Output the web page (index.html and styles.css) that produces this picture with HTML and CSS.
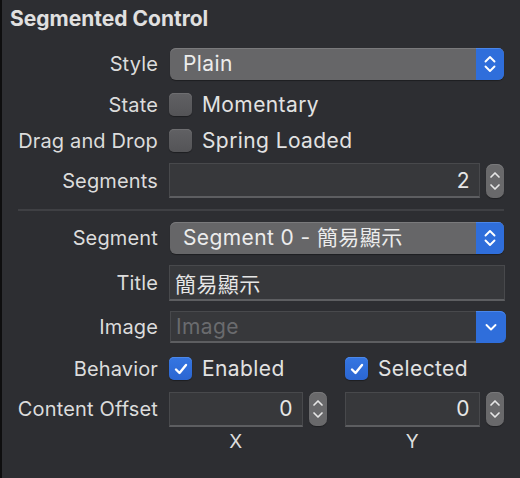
FILE: index.html
```html
<!DOCTYPE html>
<html>
<head>
<meta charset="utf-8">
<link rel="stylesheet" href="styles.css">
</head>
<body>
<div class="panel">
  <div class="heading">Segmented Control</div>

  <div class="row r-style">
    <div class="label">Style</div>
    <div class="popup">
      <span class="popup-text">Plain</span>
      <span class="popup-btn">
        <svg width="14" height="20" viewBox="0 0 14 20"><path d="M2.5 7.5 L7 3 L11.5 7.5 M2.5 12.5 L7 17 L11.5 12.5" fill="none" stroke="#fff" stroke-width="1.9" stroke-linecap="round" stroke-linejoin="round"/></svg>
      </span>
    </div>
  </div>

  <div class="row r-check">
    <div class="label">State</div>
    <div class="checkline"><span class="cb"></span><span class="cb-text">Momentary</span></div>
  </div>

  <div class="row r-check r-drag">
    <div class="label">Drag and Drop</div>
    <div class="checkline"><span class="cb"></span><span class="cb-text">Spring Loaded</span></div>
  </div>

  <div class="row r-field r-segments">
    <div class="label">Segments</div>
    <div class="numgroup">
      <div class="field num">2</div>
      <span class="stepper">
        <svg width="12" height="26" viewBox="0 0 12 26"><path d="M2 9 L6 5 L10 9 M2 17 L6 21 L10 17" fill="none" stroke="#e6e6e6" stroke-width="1.7" stroke-linecap="round" stroke-linejoin="round"/></svg>
      </span>
    </div>
  </div>

  <div class="sep"></div>

  <div class="row r-segment">
    <div class="label">Segment</div>
    <div class="popup">
      <span class="popup-text">Segment 0 - 簡易顯示</span>
      <span class="popup-btn">
        <svg width="14" height="20" viewBox="0 0 14 20"><path d="M2.5 7.5 L7 3 L11.5 7.5 M2.5 12.5 L7 17 L11.5 12.5" fill="none" stroke="#fff" stroke-width="1.9" stroke-linecap="round" stroke-linejoin="round"/></svg>
      </span>
    </div>
  </div>

  <div class="row r-field r-title">
    <div class="label">Title</div>
    <div class="field text">簡易顯示</div>
  </div>

  <div class="row r-image">
    <div class="label">Image</div>
    <div class="combo">
      <span class="combo-text">Image</span>
      <span class="combo-btn">
        <svg width="14" height="10" viewBox="0 0 14 10"><path d="M2.5 3 L7 7.5 L11.5 3" fill="none" stroke="#fff" stroke-width="1.9" stroke-linecap="round" stroke-linejoin="round"/></svg>
      </span>
    </div>
  </div>

  <div class="row r-check r-behavior">
    <div class="label">Behavior</div>
    <div class="pair">
      <div class="checkline"><span class="cb on"><svg width="16" height="14" viewBox="0 0 16 14"><path d="M3 7.5 L6.5 11 L13 3" fill="none" stroke="#fff" stroke-width="2.4" stroke-linecap="round" stroke-linejoin="round"/></svg></span><span class="cb-text">Enabled</span></div>
      <div class="checkline"><span class="cb on"><svg width="16" height="14" viewBox="0 0 16 14"><path d="M3 7.5 L6.5 11 L13 3" fill="none" stroke="#fff" stroke-width="2.4" stroke-linecap="round" stroke-linejoin="round"/></svg></span><span class="cb-text">Selected</span></div>
    </div>
  </div>

  <div class="row r-field r-offset">
    <div class="label">Content Offset</div>
    <div class="pair">
      <div class="numgroup">
        <div class="field num">0</div>
        <span class="stepper">
          <svg width="12" height="26" viewBox="0 0 12 26"><path d="M2 9 L6 5 L10 9 M2 17 L6 21 L10 17" fill="none" stroke="#e6e6e6" stroke-width="1.7" stroke-linecap="round" stroke-linejoin="round"/></svg>
        </span>
      </div>
      <div class="numgroup">
        <div class="field num">0</div>
        <span class="stepper">
          <svg width="12" height="26" viewBox="0 0 12 26"><path d="M2 9 L6 5 L10 9 M2 17 L6 21 L10 17" fill="none" stroke="#e6e6e6" stroke-width="1.7" stroke-linecap="round" stroke-linejoin="round"/></svg>
        </span>
      </div>
    </div>
  </div>

  <div class="row r-axis">
    <div class="label"></div>
    <div class="pair">
      <div class="axis">X</div>
      <div class="axis">Y</div>
    </div>
  </div>
</div>
</body>
</html>
```

FILE: styles.css
```css
html, body {
  margin: 0;
  padding: 0;
  background: #2d2e32;
}
body {
  width: 520px;
  height: 478px;
  overflow: hidden;
  font-family: "Inter", "Noto Sans CJK TC", sans-serif;
  color: #dedede;
}
.panel {
  box-sizing: border-box;
  height: 478px;
  border-left: 2px solid #0e0e0f;
  padding-right: 16px;
  display: flex;
  flex-direction: column;
}
.heading {
  height: 37px;
  line-height: 37px;
  padding-left: 8px;
  font-size: 21px;
  font-weight: 700;
  color: #e0e0e0;
  letter-spacing: 0;
}
.row {
  display: grid;
  grid-template-columns: 156px 1fr;
  column-gap: 11px;
  align-items: center;
  font-size: 21px;
  letter-spacing: 0.4px;
}
.label {
  text-align: right;
  color: #dcdcdc;
  white-space: nowrap;
  font-size: 20px;
  letter-spacing: 0.15px;
}
.r-style { margin-top: 11px; height: 32px; }
.r-check { margin-top: 12px; height: 24px; }
.r-drag { margin-top: 12px; }
.r-segments { margin-top: 11px; height: 35px; }
.sep {
  margin: 11px 0 0 16px;
  height: 2px;
  background: #3f4044;
}
.r-segment { margin-top: 11px; height: 32px; }
.r-title { margin-top: 11px; height: 36px; }
.r-image { margin-top: 10px; height: 32px; }
.r-behavior { margin-top: 13px; }
.r-offset { margin-top: 11px; height: 36px; }
.r-axis { margin-top: 3px; height: 22px; }

/* popup button */
.popup {
  height: 32px;
  display: flex;
  border-radius: 6px;
  overflow: hidden;
  background: #666668;
  box-shadow: inset 0 1px 0 #7a7a7c, 0 1px 1px rgba(0,0,0,0.35);
  margin-left: 1px;
}
.popup-text {
  flex: 1;
  padding-left: 13px;
  line-height: 32px;
  color: #ececec;
  white-space: nowrap;
}
.popup-btn {
  width: 28px;
  background: #2f6edb;
  box-shadow: inset 0 1px 0 #4a86ea;
  display: flex;
  align-items: center;
  justify-content: center;
}

/* checkbox */
.checkline {
  display: flex;
  align-items: center;
  gap: 10px;
}
.cb {
  box-sizing: border-box;
  width: 23px;
  height: 23px;
  border-radius: 5px;
  background: linear-gradient(#616164, #545457);
  box-shadow: inset 0 1px 0 #6e6e71, 0 1px 1px rgba(0,0,0,0.35);
  display: flex;
  align-items: center;
  justify-content: center;
}
.cb.on {
  background: linear-gradient(#3576e2, #2b66d2);
  box-shadow: inset 0 1px 0 #4c88ea, 0 1px 1px rgba(0,0,0,0.35);
}
.cb-text { color: #e2e2e2; white-space: nowrap; }

/* fields */
.field {
  box-sizing: border-box;
  height: 35px;
  background: #37383b;
  border: 1px solid #48494c;
  border-bottom: 2px solid #5d5e61;
  display: flex;
  align-items: center;
}
.field.num {
  flex: 1;
  justify-content: flex-end;
  padding-right: 9px;
  color: #e6e6e6;
}
.field.text {
  height: 36px;
  padding-left: 5px;
  color: #e6e6e6;
  margin-right: -1px;
}
.numgroup {
  display: flex;
  align-items: center;
  gap: 6px;
}
.stepper {
  width: 18px;
  height: 34px;
  border-radius: 7px;
  background: #69696b;
  box-shadow: inset 0 1px 0 #79797b, 0 1px 1px rgba(0,0,0,0.3);
  display: flex;
  align-items: center;
  justify-content: center;
}
.pair {
  display: grid;
  grid-template-columns: 158px 1fr;
  column-gap: 18px;
  align-items: center;
}

/* combo box */
.combo {
  height: 32px;
  display: flex;
  margin-left: 1px;
  margin-right: -2px;
}
.combo-text {
  flex: 1;
  box-sizing: border-box;
  background: #37383b;
  border: 1px solid #48494c;
  border-bottom: 2px solid #5d5e61;
  border-right: none;
  padding-left: 5px;
  line-height: 29px;
  color: #6a6b6e;
}
.combo-btn {
  width: 30px;
  background: #2f6edb;
  border-radius: 0 6px 6px 0;
  box-shadow: inset 0 1px 0 #4a86ea;
  display: flex;
  align-items: center;
  justify-content: center;
}
.axis {
  text-align: center;
  font-size: 19px;
  color: #dedede;
  padding-right: 24px;
}
```
